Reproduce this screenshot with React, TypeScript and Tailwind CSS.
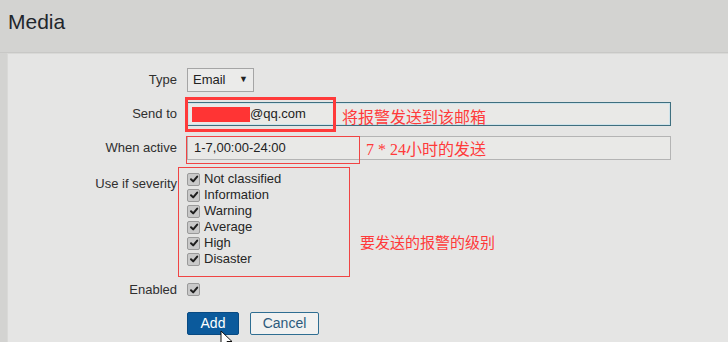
import React from 'react';

// ─── Config ───────────────────────────────────────────────────────────────────

const SEVERITIES = ['Not classified', 'Information', 'Warning', 'Average', 'High', 'Disaster'];

const CJK = { fontFamily: '"Noto Sans CJK SC", "DejaVu Sans", sans-serif' };

// ─── Bits ─────────────────────────────────────────────────────────────────────

function Check() {
  return (
    <span className="flex items-center justify-center w-[13px] h-[13px] rounded-[2px] bg-[#c9c9c9] border border-[#9a9a9a] shrink-0">
      <svg width="10" height="10" viewBox="0 0 10 10" fill="none" stroke="#1e1e1e" strokeWidth={2} strokeLinecap="round" strokeLinejoin="round">
        <polyline points="2 5.2 4.2 7.4 8.2 2.6" />
      </svg>
    </span>
  );
}

function Row({ label, children, className = '' }: { label: string; children: React.ReactNode; className?: string }) {
  return (
    <div className={`flex items-center ${className}`}>
      <div className="w-[169px] text-right text-[13px] text-[#2f2f2f]">{label}</div>
      <div className="ml-[10px] flex items-center">{children}</div>
    </div>
  );
}

function Cursor() {
  return (
    <svg width="14" height="20" viewBox="0 0 14 20" className="absolute left-[220px] top-[330px]">
      <path d="M1 1 L1 16 L4.5 12.5 L7 18.5 L9.5 17.5 L7 11.5 L12 11.5 Z" fill="#fff" stroke="#111" strokeWidth={1} strokeLinejoin="round" />
    </svg>
  );
}

// ─── Page ─────────────────────────────────────────────────────────────────────

export default function App() {
  return (
    <div className="relative w-[728px] h-[342px] overflow-hidden bg-[#d3d3d1]" style={{ fontFamily: '"Liberation Sans", Arial, sans-serif' }}>
      {/* Header */}
      <div className="h-[53px] pl-[8px] pt-[9px] border-b border-[#c8c8c6]">
        <h1 className="text-[21px] leading-[26px] text-[#1f262c]">Media</h1>
      </div>

      {/* Form panel */}
      <div className="ml-[7px] h-[289px] bg-[#e5e5e4] border-l border-t border-[#d9d9d7] pt-[14px] text-[#222]">
        <Row label="Type">
          <div className="flex items-center justify-between w-[67px] h-[24px] px-[5px] border border-[#a5a5a5] bg-[#ebebea] text-[13px]">
            <span>Email</span>
            <span className="text-[9px]">▼</span>
          </div>
        </Row>

        <Row label="Send to" className="mt-[10px]">
          <div className="flex items-center w-[484px] h-[24px] px-[4px] border border-[#3f6f7f] shadow-[inset_0_0_0_1px_#cfe3ea] bg-[#e9e9e7] text-[13px]">
            <span className="inline-block w-[58px] h-[15px] bg-[#ff3434]" />
            <span>@qq.com</span>
          </div>
        </Row>

        <Row label="When active" className="mt-[10px]">
          <div className="flex items-center w-[484px] h-[24px] px-[6px] border border-[#b4b4b4] bg-[#e9e9e7] text-[13px]">
            1-7,00:00-24:00
          </div>
        </Row>

        <div className="flex mt-[10px]">
          <div className="w-[169px] text-right text-[13px] text-[#2f2f2f] pt-[4px]">Use if severity</div>
          <div className="ml-[10px] pt-[1px] flex flex-col">
            {SEVERITIES.map((s) => (
              <div key={s} className="flex items-center gap-[4px] h-[16px] text-[13px] text-[#252525]">
                <Check />
                <span>{s}</span>
              </div>
            ))}
          </div>
        </div>

        <Row label="Enabled" className="mt-[13px]">
          <Check />
        </Row>

        <div className="flex gap-[11px] ml-[179px] mt-[12px]">
          <button type="button" className="w-[52px] h-[23px] rounded-[2px] bg-[#0b5a9c] border border-[#084a82] text-white text-[14px]">
            Add
          </button>
          <button type="button" className="w-[69px] h-[23px] rounded-[2px] bg-[#f1f1f0] border border-[#2f6e92] text-[#2c5a7c] text-[14px]">
            Cancel
          </button>
        </div>
      </div>

      {/* ── Red annotations ── */}
      <div className="absolute left-[185px] top-[97px] w-[151px] h-[35px] border-[3px] border-[#ff3a3a]" />
      <div className="absolute left-[342px] top-[104px] text-[16px] leading-[24px] text-[#ff3a3a]" style={CJK}>
        将报警发送到该邮箱
      </div>

      <div className="absolute left-[186px] top-[136px] w-[174px] h-[28px] border border-[#f04444]" />
      <div className="absolute left-[366px] top-[136px] text-[16px] leading-[24px] text-[#ff3a3a]" style={CJK}>
        <span style={{ fontFamily: '"Liberation Serif", serif' }}>7 * 24</span>小时的发送
      </div>

      <div className="absolute left-[178px] top-[167px] w-[172px] h-[110px] border border-[#f04444]" />
      <div className="absolute left-[360px] top-[231px] text-[15px] leading-[22px] text-[#ff3a3a]" style={CJK}>
        要发送的报警的级别
      </div>

      <Cursor />
    </div>
  );
}
